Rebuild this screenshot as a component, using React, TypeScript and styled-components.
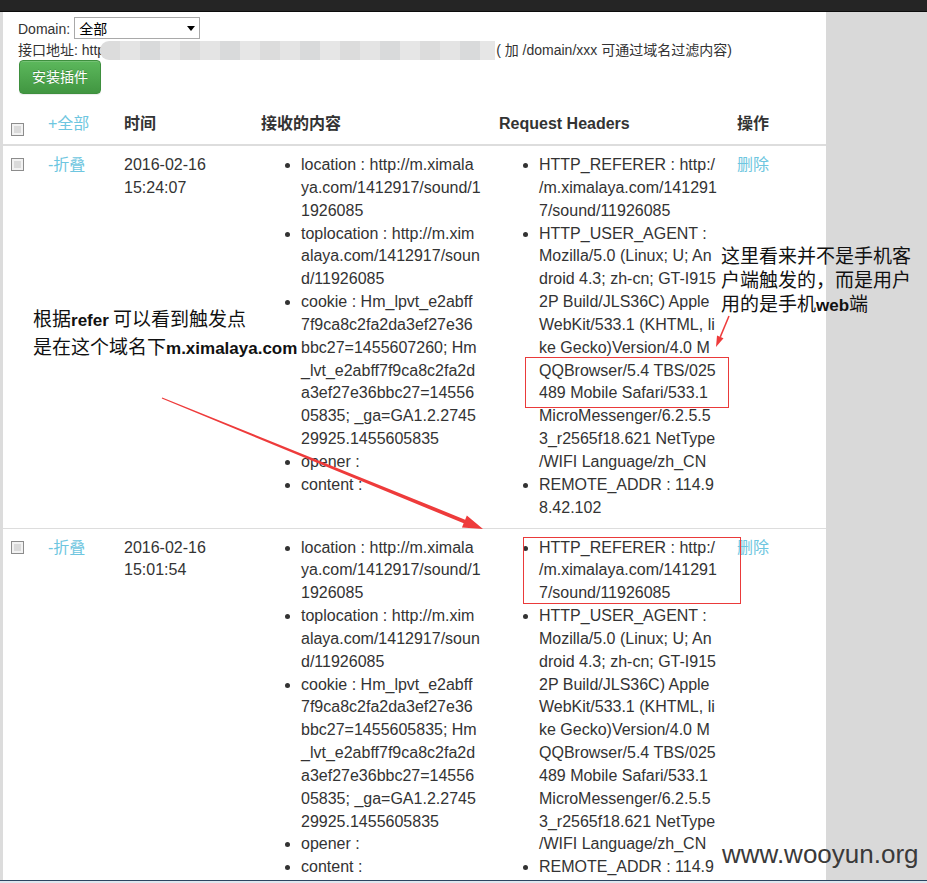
import styled, { createGlobalStyle } from 'styled-components';

const GlobalStyle = createGlobalStyle`
  html, body {
    margin: 0;
    padding: 0;
    overflow: hidden;
    background: #fff;
  }
  * {
    box-sizing: border-box;
  }
`;

type Entry = {
  key: string;
  value: string;
};

type Record = {
  time: string[];
  content: Entry[];
  headers: Entry[];
};

const sound = 'http://m.ximalaya.com/1412917/sound/11926085';
const ua =
  'Mozilla/5.0 (Linux; U; Android 4.3; zh-cn; GT-I9152P Build/JLS36C) AppleWebKit/533.1 (KHTML, like Gecko)Version/4.0 MQQBrowser/5.4 TBS/025489 Mobile Safari/533.1 MicroMessenger/6.2.5.53_r2565f18.621 NetType/WIFI Language/zh_CN';

const makeRecord = (time: string[], lpvt: string): Record => ({
  time,
  content: [
    { key: 'location', value: sound },
    { key: 'toplocation', value: sound },
    {
      key: 'cookie',
      value: `Hm_lpvt_e2abff7f9ca8c2fa2da3ef27e36bbc27=${lpvt}; Hm_lvt_e2abff7f9ca8c2fa2da3ef27e36bbc27=1455605835; _ga=GA1.2.274529925.1455605835`,
    },
    { key: 'opener', value: '' },
    { key: 'content', value: '' },
  ],
  headers: [
    { key: 'HTTP_REFERER', value: sound },
    { key: 'HTTP_USER_AGENT', value: ua },
    { key: 'REMOTE_ADDR', value: '114.98.42.102' },
  ],
});

const records: Record[] = [
  makeRecord(['2016-02-16', '15:24:07'], '1455607260'),
  makeRecord(['2016-02-16', '15:01:54'], '1455605835'),
];

const Window = styled.div`
  width: 927px;
  height: 883px;
  display: flex;
  flex-direction: column;
  font-family: 'Liberation Sans', Arial, 'Noto Sans CJK SC', sans-serif;
  color: #333;
`;

const TopBar = styled.div`
  height: 12px;
  flex-shrink: 0;
  background: #252525;
  border-bottom: 1px solid #0c0c0c;
`;

const Body = styled.div`
  position: relative;
  height: 868px;
  flex-shrink: 0;
  display: flex;
`;

const LeftStrip = styled.div`
  width: 3px;
  background: #dcdcdc;
`;

const Main = styled.div`
  width: 823px;
  background: #fff;
  overflow: hidden;
`;

const SidePanel = styled.div`
  flex: 1;
  background: #d9d9d9;
`;

const BottomLine = styled.div`
  height: 3px;
  flex-shrink: 0;
  background: #dfe6ee;
  border-top: 1px solid #2c4560;
`;

const Form = styled.div`
  padding: 5px 0 0 15px;
  font-size: 14px;
  line-height: 20px;
`;

const DomainRow = styled.div`
  height: 23px;
  display: flex;
  align-items: center;
  gap: 4px;
`;

const FakeSelect = styled.div`
  align-self: flex-start;
  width: 126px;
  height: 22px;
  border: 1px solid #a9a9a9;
  background: #fff;
  color: #000;
  display: flex;
  align-items: center;
  justify-content: space-between;
  padding: 0 4px 0 4px;
  font-family: 'Noto Sans CJK SC', sans-serif;
  font-size: 14px;
`;

const Caret = styled.span`
  width: 0;
  height: 0;
  border-left: 4px solid transparent;
  border-right: 4px solid transparent;
  border-top: 5px solid #000;
`;

const AddrRow = styled.div`
  height: 20px;
  display: flex;
  align-items: center;
  white-space: nowrap;
`;

const Blur = styled.span`
  display: inline-block;
  width: 395px;
  height: 19px;
  margin-left: -5px;
  margin-right: 1px;
  border-radius: 9px 0 0 9px;
  background: repeating-linear-gradient(
    to right,
    #dcdcdc 0,
    #dcdcdc 20px,
    #e4e4e4 20px,
    #e4e4e4 40px,
    #d9dadb 40px,
    #d9dadb 60px,
    #e6e6e6 60px,
    #e6e6e6 80px
  );
`;

const InstallButton = styled.button`
  display: block;
  margin: 0 0 0 1px;
  padding: 6px 12px;
  font-family: 'Liberation Sans', 'Noto Sans CJK SC', sans-serif;
  font-size: 14px;
  line-height: 20px;
  color: #fff;
  border: 1px solid #3e8f3e;
  border-radius: 4px;
  background: linear-gradient(to bottom, #5cb85c 0%, #419641 100%);
  text-shadow: 0 -1px 0 rgba(0, 0, 0, 0.2);
  box-shadow: inset 0 1px 0 rgba(255, 255, 255, 0.15), 0 1px 1px rgba(0, 0, 0, 0.075);
`;

const Table = styled.table`
  width: 823px;
  margin-top: 10px;
  border-collapse: collapse;
  table-layout: fixed;
  font-size: 16px;
  line-height: 1.428571429;
`;

const Th = styled.th`
  padding: 8px;
  text-align: left;
  vertical-align: bottom;
  font-weight: bold;
  border-bottom: 2px solid #ddd;
`;

const Td = styled.td`
  padding: 8px;
  vertical-align: top;
  border-top: 1px solid #ddd;

  tr:first-child > & {
    border-top: none;
  }
`;

const Check = styled.input<{ $head?: boolean }>`
  appearance: none;
  display: block;
  width: 13px;
  height: 13px;
  margin: ${({ $head }) => ($head ? '11px' : '4px')} 0 0 0;
  border: 1px solid #8c8c8c;
  background: #dadada;
  box-shadow: inset 0 0 0 2px #f2f2f2;
`;

const Link = styled.a`
  color: #6ec6e0;
  text-decoration: none;
  font-weight: normal;
`;

const List = styled.ul<{ $trim: number }>`
  margin: 0;
  padding-left: 40px;
  padding-right: ${({ $trim }) => $trim}px;
  list-style: disc;
`;

const Item = styled.li`
  word-break: break-all;
  line-break: anywhere;
`;

const Overlay = styled.div`
  position: absolute;
  inset: 0;
  pointer-events: none;
`;

const Note = styled.div<{ $left: number; $top: number; $lh: number }>`
  position: absolute;
  left: ${({ $left }) => $left}px;
  top: ${({ $top }) => $top}px;
  font-family: 'Noto Sans CJK SC', sans-serif;
  font-size: 19px;
  line-height: ${({ $lh }) => $lh}px;
  color: #111;
  white-space: nowrap;

  b {
    font-family: 'Liberation Sans', Arial, sans-serif;
    font-size: 17px;
    font-weight: 700;
  }
`;

const RedBox = styled.div<{ $left: number; $top: number; $w: number; $h: number }>`
  position: absolute;
  left: ${({ $left }) => $left}px;
  top: ${({ $top }) => $top}px;
  width: ${({ $w }) => $w}px;
  height: ${({ $h }) => $h}px;
  border: 1px solid #ea3a3a;
`;

const Watermark = styled.div`
  position: absolute;
  left: 722px;
  top: 827px;
  font-family: 'Liberation Sans', Arial, sans-serif;
  font-size: 26px;
  line-height: 30px;
  color: #3a3a3a;
`;

const Arrows = styled.svg`
  position: absolute;
  left: 0;
  top: 0;
`;

const EntryList = ({ items, trim }: { items: Entry[]; trim: number }) => (
  <List $trim={trim}>
    {items.map((e) => (
      <Item key={e.key}>
        {e.key} : {e.value}
      </Item>
    ))}
  </List>
);

const App = () => {
  return (
    <Window>
      <GlobalStyle />
      <TopBar />
      <Body>
        <LeftStrip />
        <Main>
          <Form>
            <DomainRow>
              <span>Domain:</span>
              <FakeSelect>
                全部
                <Caret />
              </FakeSelect>
            </DomainRow>
            <AddrRow>
              接口地址: http
              <Blur />( 加 /domain/xxx 可通过域名过滤内容)
            </AddrRow>
            <InstallButton>安装插件</InstallButton>
          </Form>
          <Table>
            <colgroup>
              <col style={{ width: 37 }} />
              <col style={{ width: 76 }} />
              <col style={{ width: 137 }} />
              <col style={{ width: 238 }} />
              <col style={{ width: 238 }} />
              <col style={{ width: 97 }} />
            </colgroup>
            <thead>
              <tr>
                <Th>
                  <Check type="checkbox" $head />
                </Th>
                <Th>
                  <Link href="#">+全部</Link>
                </Th>
                <Th>时间</Th>
                <Th>接收的内容</Th>
                <Th>Request Headers</Th>
                <Th>操作</Th>
              </tr>
            </thead>
            <tbody>
              {records.map((r, i) => (
                <tr key={i}>
                  <Td>
                    <Check type="checkbox" />
                  </Td>
                  <Td>
                    <Link href="#">-折叠</Link>
                  </Td>
                  <Td>
                    {r.time[0]}
                    <br />
                    {r.time[1]}
                  </Td>
                  <Td>
                    <EntryList items={r.content} trim={2} />
                  </Td>
                  <Td>
                    <EntryList items={r.headers} trim={4} />
                  </Td>
                  <Td>
                    <Link href="#">删除</Link>
                  </Td>
                </tr>
              ))}
            </tbody>
          </Table>
        </Main>
        <SidePanel />

        <Overlay>
          <Note $left={33} $top={293} $lh={25}>
            根据<b>refer</b> 可以看到触发点
            <br />
            是在这个域名下<b>m.ximalaya.com</b>
          </Note>
          <Note $left={721} $top={231} $lh={24}>
            这里看来并不是手机客
            <br />
            户端触发的，而是用户
            <br />
            用的是手机<b>web</b>端
          </Note>
          <RedBox $left={525} $top={345} $w={204} $h={51} />
          <RedBox $left={523} $top={525} $w={218} $h={67} />
          <Arrows width={927} height={868} viewBox="0 0 927 868">
            <polygon
              fill="#ee3b3b"
              points="162.23,385.44 465.15,507.64 466.84,503.47 483,517 461.96,515.53 463.65,511.36 161.77,386.56"
            />
            <line x1={729} y1={304} x2={720.3} y2={324.9} stroke="#ee3b3b" strokeWidth={1.5} />
            <polygon fill="#ee3b3b" points="723.49,326.21 716,335 717.03,323.51" />
          </Arrows>
          <Watermark>www.wooyun.org</Watermark>
        </Overlay>
      </Body>
      <BottomLine />
    </Window>
  );
};

export default App;
